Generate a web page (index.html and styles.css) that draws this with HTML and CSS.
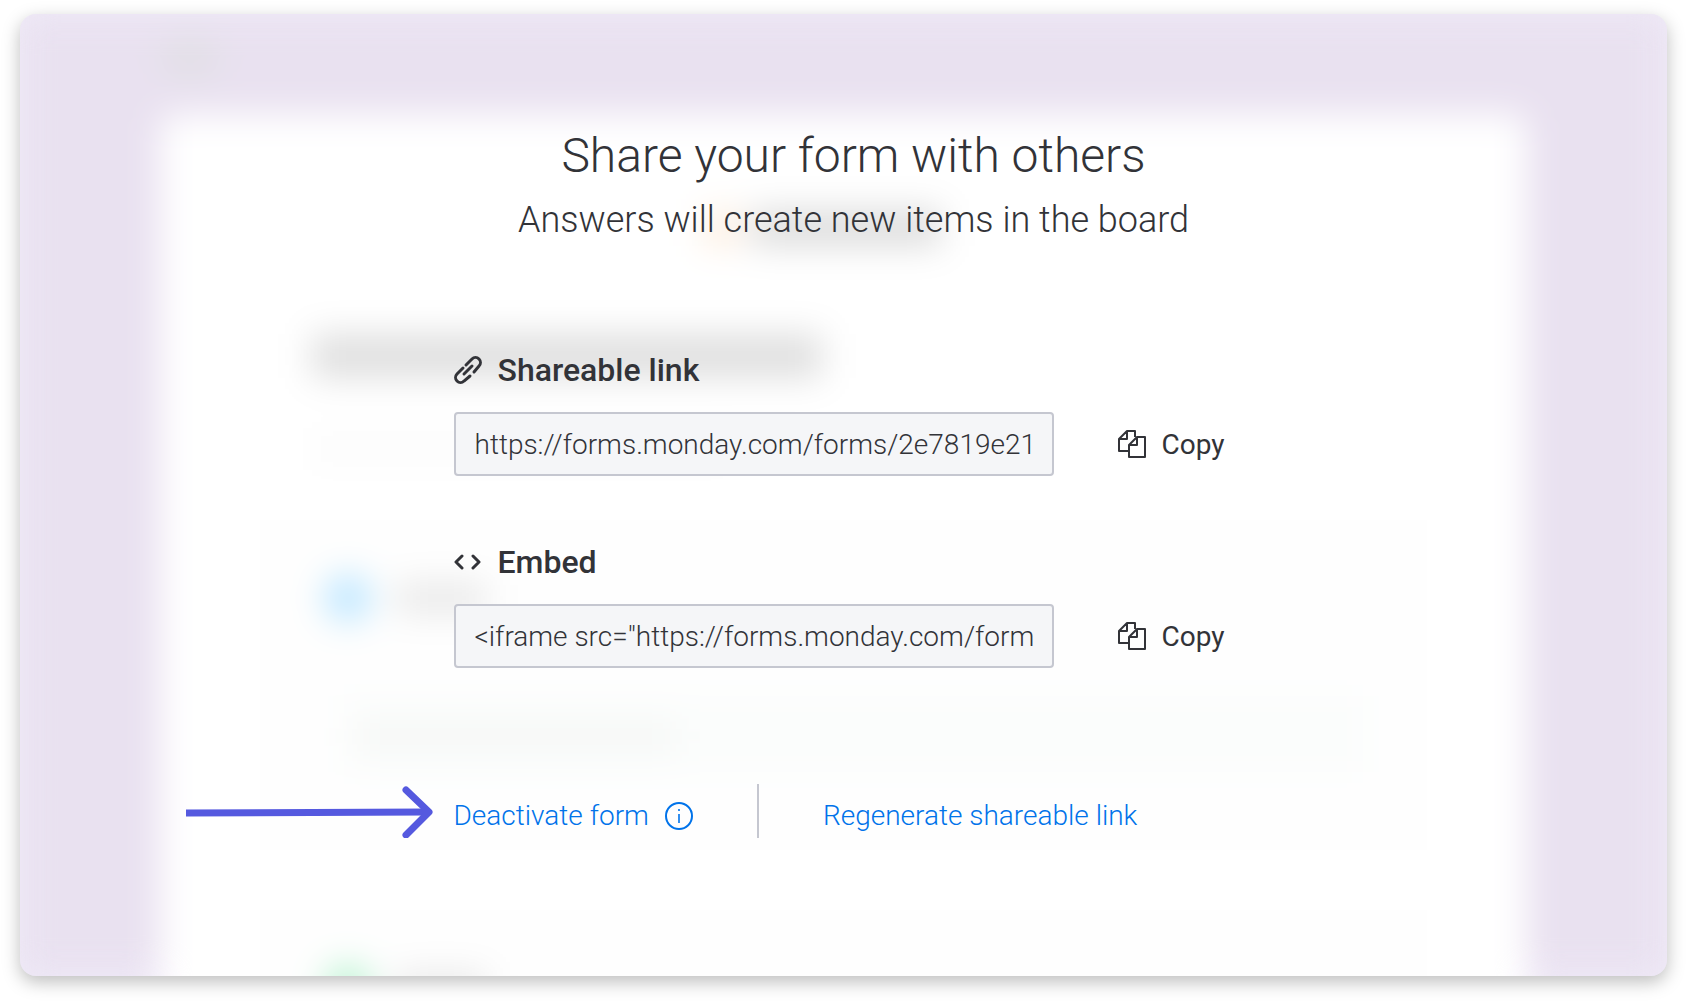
FILE: index.html
```html
<!DOCTYPE html>
<html lang="en">

<head>
    <meta charset="UTF-8">
    <meta name="viewport" content="width=device-width, initial-scale=1.0">
    <title>Share your form</title>
    <link rel="stylesheet" href="styles.css">
</head>

<body>
    <main class="panel">
        <!-- blurred form behind the dialog -->
        <div class="backdrop" aria-hidden="true">
            <div class="brand-dot"></div>
            <div class="sheet">
                <div class="logo">
                    <span class="logo-mark"></span>
                    <span class="logo-name"></span>
                </div>
                <div class="form-title"></div>
                <div class="form-desc"></div>
                <div class="question">
                    <div class="question-head">
                        <span class="dot blue"></span>
                        <span class="label"></span>
                    </div>
                    <div class="answer"><span class="placeholder"></span></div>
                </div>
                <div class="question">
                    <div class="question-head">
                        <span class="dot green"></span>
                        <span class="label"></span>
                    </div>
                </div>
            </div>
        </div>

        <div class="share">
            <h1>Share your form with others</h1>
            <p class="subtitle">Answers will create new items in the board</p>

            <section class="field">
                <label for="link">
                    <svg class="icon" viewBox="0 0 28 30" fill="none" stroke="currentColor" stroke-width="3" stroke-linecap="round">
                        <path d="M12 10l6-6a5 5 0 0 1 7 0a5 5 0 0 1 0 7l-5 6M9 13l-6 6a5 5 0 0 0 0 7a5 5 0 0 0 7 0l6-5M10 19l8-8" />
                    </svg>
                    Shareable link
                </label>
                <div class="row">
                    <input type="text" id="link" value="https://forms.monday.com/forms/2e7819e21" readonly>
                    <button type="button">
                        <svg class="icon" viewBox="0 0 28 28" fill="none" stroke="currentColor" stroke-width="2" stroke-linejoin="round">
                            <path d="M11 21H1V9l8-8h8v6M9 1v8H1M19 7h8v20H11V15zM19 7v8h-8" />
                        </svg>
                        Copy
                    </button>
                </div>
            </section>

            <section class="field">
                <label for="embed">
                    <svg class="icon" viewBox="0 0 28 30" fill="none" stroke="currentColor" stroke-width="3" stroke-linecap="round" stroke-linejoin="round">
                        <path d="M8 9l-6 6 6 6M19 9l6 6-6 6" />
                    </svg>
                    Embed
                </label>
                <div class="row">
                    <input type="text" id="embed" value="&lt;iframe src=&quot;https://forms.monday.com/form" readonly>
                    <button type="button">
                        <svg class="icon" viewBox="0 0 28 28" fill="none" stroke="currentColor" stroke-width="2" stroke-linejoin="round">
                            <path d="M11 21H1V9l8-8h8v6M9 1v8H1M19 7h8v20H11V15zM19 7v8h-8" />
                        </svg>
                        Copy
                    </button>
                </div>
            </section>

            <div class="actions">
                <svg class="arrow" viewBox="0 0 248 54" fill="none" stroke="currentColor" stroke-width="7">
                    <path d="M0 29L242 28" />
                    <path d="M220 6l23 22-23 23" stroke-linecap="round" stroke-linejoin="round" />
                </svg>
                <a href="#">
                    Deactivate form
                    <svg class="icon" viewBox="0 0 28 28" fill="none" stroke="currentColor">
                        <circle cx="14" cy="14" r="13" stroke-width="2" />
                        <path d="M14 12v9M14 7v2" stroke-width="1.6" />
                    </svg>
                </a>
                <a class="regenerate" href="#">Regenerate shareable link</a>
            </div>
        </div>
    </main>
</body>

</html>
```
FILE: styles.css
```css
* {
    box-sizing: border-box;
}

body {
    margin: 0;
    padding: 14px 19px 26px 20px;
    min-height: 100vh;
    display: flex;
    background: white;
    color: #323338;
    font-family: Roboto, sans-serif;
    font-weight: 300;
}

.panel {
    position: relative;
    flex: 1;
    overflow: hidden;
    border-radius: 16px;
    background: #f0ebf8;
    box-shadow: 0 6px 18px rgba(0, 0, 0, 0.26);
}

/* blurred form */
.backdrop {
    position: absolute;
    inset: 0;
    padding: 24px 140px 0;
    background: #e9e1f0;
    filter: blur(17px);
}

.brand-dot {
    width: 60px;
    height: 40px;
    margin-bottom: 36px;
    border-radius: 20px;
    background: #e2e0e6;
}

.sheet {
    height: 100%;
    padding: 96px 100px 0;
    border-radius: 16px;
    background: white;
}

.logo {
    display: flex;
    justify-content: center;
    gap: 12px;
    margin-right: 44px;
}

.logo-mark {
    width: 36px;
    height: 36px;
    background: #fdeedf;
}

.logo-name {
    width: 190px;
    height: 36px;
    background: #dcdcdc;
}

.form-title {
    width: 510px;
    height: 44px;
    margin: 88px 0 0 52px;
    background: #dfdfdf;
}

.form-desc {
    width: 420px;
    height: 22px;
    margin: 60px 0 0 52px;
    background: #fafafa;
}

.question {
    height: 330px;
    margin-top: 60px;
    padding: 54px 64px 0;
    background: #fefefe;
}

.question-head {
    display: flex;
    align-items: center;
    gap: 24px;
}

.dot {
    width: 48px;
    height: 48px;
    border-radius: 50%;
}

.blue {
    background: #bfe7ff;
}

.green {
    background: #bdf3d3;
}

.label {
    width: 90px;
    height: 30px;
    background: #e8e8e8;
}

.answer {
    height: 76px;
    margin: 74px 0 0 20px;
    padding: 28px 12px;
    background: #fbfdfc;
}

.placeholder {
    display: block;
    width: 320px;
    height: 26px;
    background: #f5f6f5;
}

/* share dialog */
.share {
    position: relative;
    width: 820px;
    max-width: 100%;
    margin: 0 auto;
    padding: 113px 0 0 20px;
}

h1 {
    margin: 0;
    font-size: 48px;
    line-height: 58px;
    font-weight: 300;
    text-align: center;
}

.subtitle {
    margin: 13px 0 106px;
    font-size: 36px;
    line-height: 44px;
    text-align: center;
}

.field {
    margin-bottom: 64px;
}

label {
    display: flex;
    align-items: center;
    gap: 16px;
    margin-bottom: 20px;
    font-size: 32px;
    line-height: 44px;
    font-weight: 500;
}

.icon {
    flex: none;
    width: 28px;
    height: 30px;
}

.row {
    display: flex;
    gap: 64px;
}

input {
    width: 600px;
    height: 64px;
    padding: 0 19px;
    border: 2px solid #c5c7d0;
    border-radius: 4px;
    background: #f5f6f8;
    color: inherit;
    font: inherit;
    font-size: 28px;
}

button {
    display: flex;
    align-items: center;
    gap: 16px;
    padding: 0;
    border: none;
    background: none;
    color: inherit;
    font: inherit;
    font-size: 28px;
    font-weight: 400;
    cursor: pointer;
}

.actions {
    position: relative;
    display: flex;
    gap: 64px;
    margin-top: 116px;
    line-height: 44px;
}

.actions a {
    display: flex;
    align-items: center;
    gap: 16px;
    padding-top: 10px;
    color: #0073ea;
    font-size: 28px;
    text-decoration: none;
}

.actions .regenerate {
    padding-left: 64px;
    border-left: 2px solid #c5c7d0;
}

/* pointer to the deactivate link */
.arrow {
    position: absolute;
    right: 100%;
    width: 248px;
    height: 54px;
    margin-right: 20px;
    color: #5559df;
}
```
